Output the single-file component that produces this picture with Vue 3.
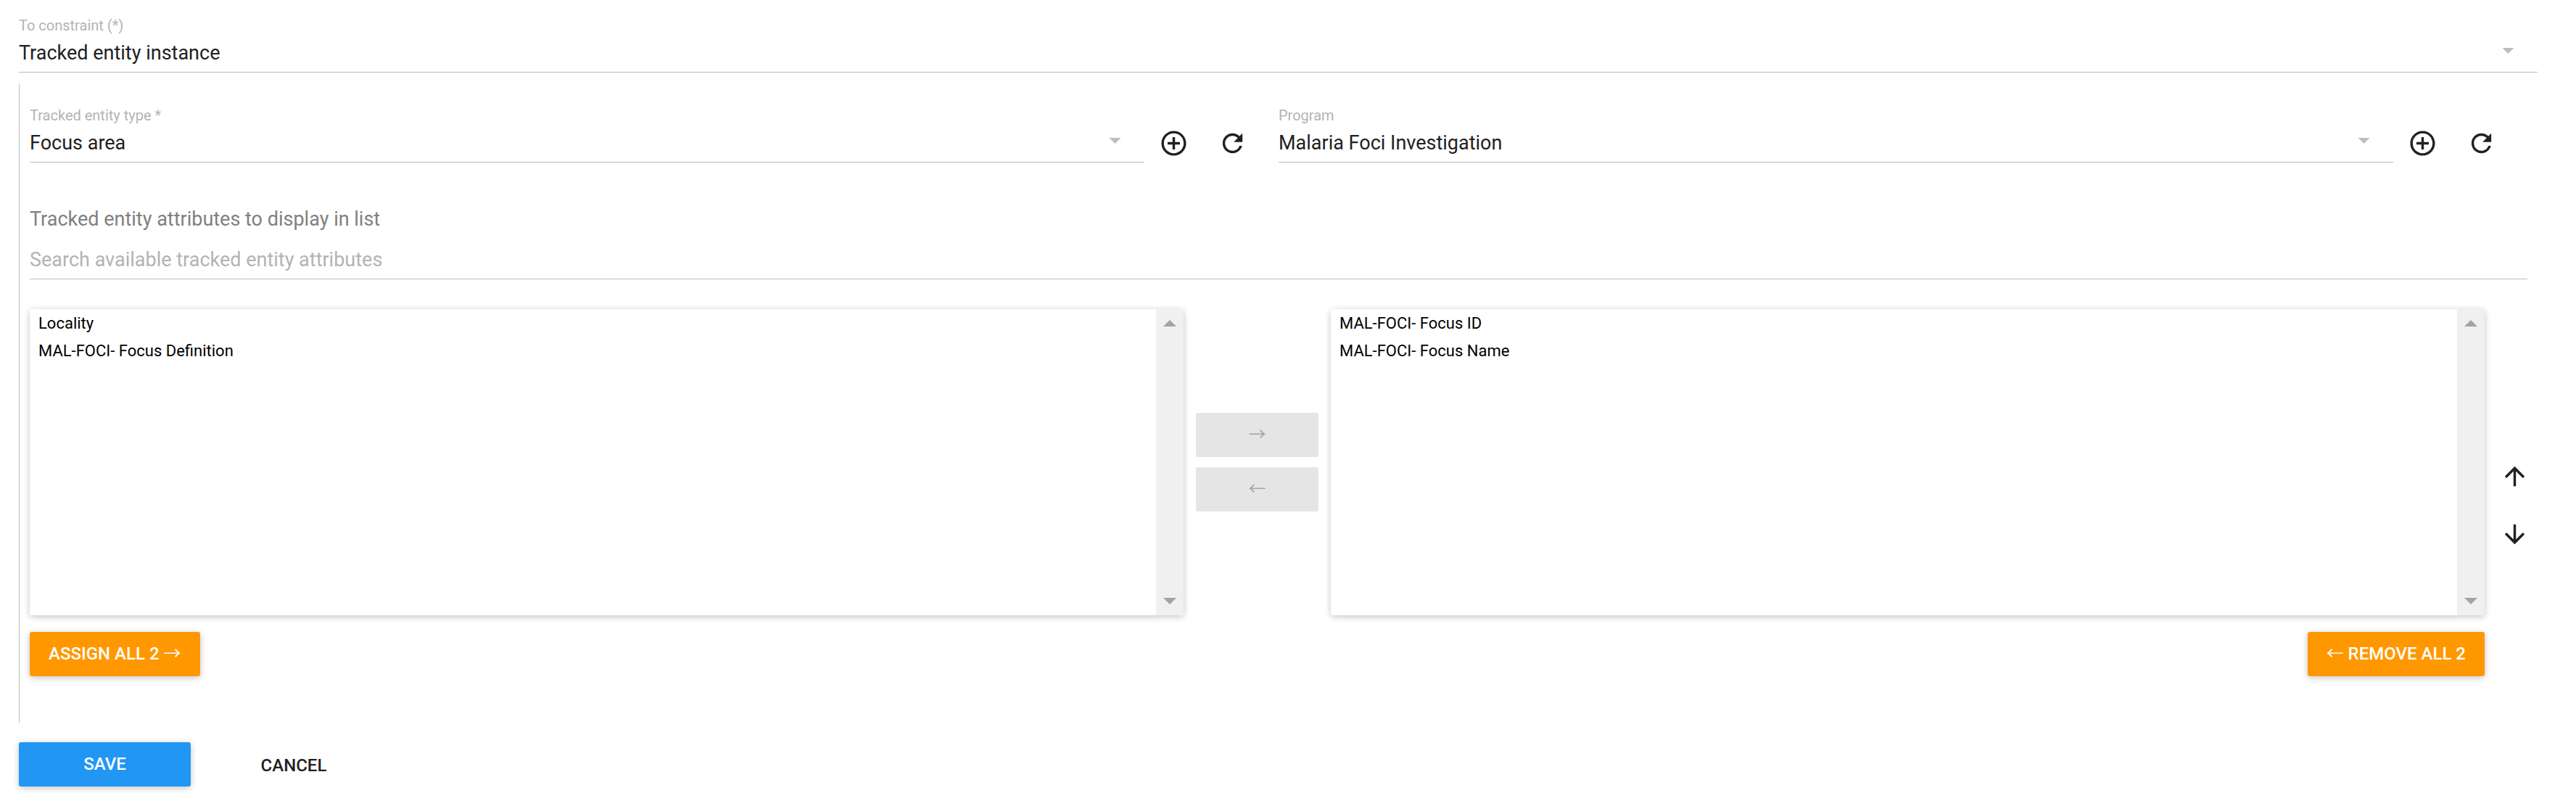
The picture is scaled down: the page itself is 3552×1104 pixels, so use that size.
<script setup>
import { ref } from 'vue'

const constraint = ref('Tracked entity instance')
const fields = ref([
  { id: 'entity-type', label: 'Tracked entity type *', value: 'Focus area' },
  { id: 'program', label: 'Program', value: 'Malaria Foci Investigation' },
])
const search = ref('')
const available = ['Locality', 'MAL-FOCI- Focus Definition']
const assigned = ['MAL-FOCI- Focus ID', 'MAL-FOCI- Focus Name']
</script>

<template>
  <form class="page" @submit.prevent>
    <div class="field">
      <label for="constraint">To constraint (*)</label>
      <select id="constraint" v-model="constraint">
        <option>{{ constraint }}</option>
      </select>
      <svg class="caret" viewBox="0 0 16 8" aria-hidden="true"><path d="M0 0h16l-8 8z" /></svg>
    </div>

    <section class="constraint">
      <div class="row">
        <div v-for="f in fields" :key="f.id" class="column">
          <div class="field">
            <label :for="f.id">{{ f.label }}</label>
            <select :id="f.id" v-model="f.value">
              <option>{{ f.value }}</option>
            </select>
            <svg class="caret" viewBox="0 0 16 8" aria-hidden="true"><path d="M0 0h16l-8 8z" /></svg>
          </div>
          <button type="button" class="icon-button" aria-label="Add new">
            <svg viewBox="0 0 24 24"><path d="M13 7h-2v4H7v2h4v4h2v-4h4v-2h-4V7zm-1-5C6.48 2 2 6.48 2 12s4.48 10 10 10 10-4.480 10-10S17.520 2 12 2zm0 18c-4.410 0-8-3.590-8-8s3.590-8 8-8 8 3.590 8 8-3.590 8-8 8z" /></svg>
          </button>
          <button type="button" class="icon-button" aria-label="Refresh">
            <svg viewBox="0 0 24 24"><path d="M17.650 6.350C16.200 4.900 14.210 4 12 4c-4.420 0-7.990 3.580-7.990 8s3.570 8 7.990 8c3.730 0 6.840-2.550 7.730-6h-2.080c-.82 2.330-3.040 4-5.650 4-3.310 0-6-2.690-6-6s2.690-6 6-6c1.660 0 3.140.69 4.220 1.780L13 11h7V4l-2.350 2.350z" /></svg>
          </button>
        </div>
      </div>

      <label class="heading" for="search">Tracked entity attributes to display in list</label>
      <input id="search" v-model="search" class="search" type="text" placeholder="Search available tracked entity attributes" />

      <div class="transfer">
        <div class="list">
          <select multiple aria-label="Available attributes">
            <option v-for="a in available" :key="a">{{ a }}</option>
          </select>
          <div class="scrollbar" aria-hidden="true">
            <svg viewBox="0 0 18 9"><path d="M0 9h18L9 0z" /></svg>
            <svg viewBox="0 0 18 9"><path d="M0 0h18L9 9z" /></svg>
          </div>
        </div>
        <div class="move">
          <button type="button" class="button disabled" disabled><span class="arrow">→</span></button>
          <button type="button" class="button disabled" disabled><span class="arrow">←</span></button>
        </div>
        <div class="list">
          <select multiple aria-label="Assigned attributes">
            <option v-for="a in assigned" :key="a">{{ a }}</option>
          </select>
          <div class="scrollbar" aria-hidden="true">
            <svg viewBox="0 0 18 9"><path d="M0 9h18L9 0z" /></svg>
            <svg viewBox="0 0 18 9"><path d="M0 0h18L9 9z" /></svg>
          </div>
        </div>
        <div class="order">
          <button type="button" class="icon-button" aria-label="Move up">
            <svg viewBox="0 0 24 24"><path d="M4 12l1.410 1.410L11 7.830V20h2V7.830l5.580 5.590L20 12l-8-8-8 8z" /></svg>
          </button>
          <button type="button" class="icon-button" aria-label="Move down">
            <svg viewBox="0 0 24 24"><path d="M20 12l-1.410-1.410L13 16.170V4h-2v12.170l-5.580-5.590L4 12l8 8 8-8z" /></svg>
          </button>
        </div>
      </div>

      <div class="bulk">
        <button type="button" class="button orange">Assign all {{ available.length }} <span class="arrow">→</span></button>
        <button type="button" class="button orange"><span class="arrow">←</span> Remove all {{ assigned.length }}</button>
      </div>
    </section>

    <div class="actions">
      <button type="submit" class="button primary">Save</button>
      <button type="button" class="button flat">Cancel</button>
    </div>
  </form>
</template>

<style>
body {
  background: #fff;
}
</style>

<style scoped>
.page {
  box-sizing: border-box;
  padding: 23px 53px 16px 26px;
  font-family: Roboto, "Liberation Sans", sans-serif;
  color: #212121;
}
.page * {
  box-sizing: border-box;
}
select,
input,
button {
  margin: 0;
  padding: 0;
  border: 0;
  border-radius: 0;
  outline: 0;
  background: transparent;
  color: inherit;
  font-family: inherit;
  appearance: none;
}

/* Labelled drop-downs */
.field {
  position: relative;
  flex: 1;
  min-width: 0;
}
.field label {
  display: block;
  font-size: 20px;
  line-height: 24px;
  color: #b3b3b3;
}
.field select,
.search {
  display: block;
  width: 100%;
  height: 53px;
  border-bottom: 1px solid #bdbdbd;
  font-size: 27px;
}
.caret {
  position: absolute;
  right: 32px;
  bottom: 26px;
  width: 17px;
  height: 8px;
  fill: #bdbdbd;
  pointer-events: none;
}

.constraint {
  margin-top: 16px;
  padding: 31px 14px 64px;
  border-left: 1px solid #bdbdbd;
}
.row {
  display: flex;
}
.column {
  display: flex;
  align-items: flex-end;
  flex: 1;
  min-width: 0;
  padding-right: 23px;
}
.icon-button {
  display: flex;
  align-items: center;
  justify-content: center;
  flex: none;
  width: 81px;
  height: 54px;
}
.icon-button svg {
  flex: none;
  width: 41px;
  height: 41px;
  fill: #212121;
}

.heading {
  display: block;
  margin: 62px 0 14px;
  font-size: 27px;
  line-height: 32px;
  color: #808080;
}
.search::placeholder {
  color: #b3b3b3;
  opacity: 1;
}

/* Two lists with transfer controls */
.transfer {
  display: flex;
  margin-top: 41px;
}
.list {
  display: flex;
  flex: 1;
  min-width: 0;
  height: 422px;
  border-radius: 3px;
  overflow: hidden;
  background: #fff;
  box-shadow: 0 2px 10px rgba(0, 0, 0, 0.12), 0 2px 10px rgba(0, 0, 0, 0.12);
}
.list select {
  flex: 1;
  min-width: 0;
  height: 100%;
  padding-top: 7px;
  overflow: hidden;
  color: #000;
  font-size: 22px;
}
.list option {
  padding: 0 12px;
  min-height: 38px;
  line-height: 38px;
}
.scrollbar {
  display: flex;
  flex-direction: column;
  align-items: center;
  justify-content: space-between;
  width: 38px;
  padding: 15px 0;
  background: #f0f0f0;
}
.scrollbar svg {
  width: 18px;
  height: 9px;
  fill: #a3a3a3;
}
.move {
  display: flex;
  flex-direction: column;
  justify-content: center;
  gap: 14px;
  width: 169px;
  margin: 0 17px;
}
.order {
  display: flex;
  flex-direction: column;
  align-items: center;
  justify-content: center;
  width: 59px;
  padding: 118px 0 0 23px;
}
.order .icon-button {
  width: 41px;
  height: 80px;
}

.button {
  height: 61px;
  border-radius: 3px;
  font-size: 24px;
  font-weight: 500;
  line-height: 61px;
  text-transform: uppercase;
  white-space: nowrap;
}
.arrow {
  font-family: "Noto Sans CJK JP", sans-serif;
  font-weight: 400;
  line-height: 1;
}
.disabled {
  background: #e5e5e5;
  color: #a6a6a6;
}
.orange,
.primary {
  color: #fff;
  box-shadow: 0 2px 10px rgba(0, 0, 0, 0.12), 0 2px 10px rgba(0, 0, 0, 0.12);
}
.orange {
  padding: 0 26px;
  background: #ff9800;
}
.primary {
  width: 237px;
  background: #2196f3;
}
.flat {
  width: 150px;
  height: 65px;
  line-height: 65px;
}
.bulk {
  display: flex;
  justify-content: space-between;
  margin: 23px 59px 0 0;
}
.actions {
  display: flex;
  align-items: flex-start;
  gap: 67px;
  margin-top: 27px;
}
</style>
